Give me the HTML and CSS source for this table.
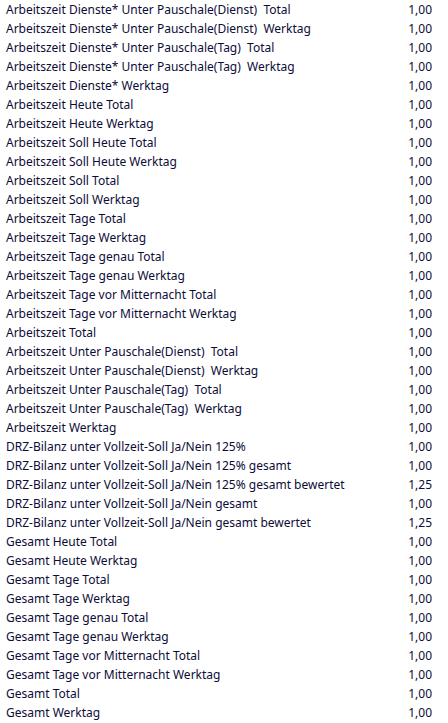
FILE: index.html
```html
<!DOCTYPE html>
<html>
<head>
<meta charset="utf-8">
<link rel="stylesheet" href="styles.css">
</head>
<body>
<div class="list">
<div class="row"><span class="name">Arbeitszeit Dienste* Unter Pauschale(Dienst)&nbsp; Total</span><span class="val">1,00</span></div>
<div class="row"><span class="name">Arbeitszeit Dienste* Unter Pauschale(Dienst)&nbsp; Werktag</span><span class="val">1,00</span></div>
<div class="row"><span class="name">Arbeitszeit Dienste* Unter Pauschale(Tag)&nbsp; Total</span><span class="val">1,00</span></div>
<div class="row"><span class="name">Arbeitszeit Dienste* Unter Pauschale(Tag)&nbsp; Werktag</span><span class="val">1,00</span></div>
<div class="row"><span class="name">Arbeitszeit Dienste* Werktag</span><span class="val">1,00</span></div>
<div class="row"><span class="name">Arbeitszeit Heute Total</span><span class="val">1,00</span></div>
<div class="row"><span class="name">Arbeitszeit Heute Werktag</span><span class="val">1,00</span></div>
<div class="row"><span class="name">Arbeitszeit Soll Heute Total</span><span class="val">1,00</span></div>
<div class="row"><span class="name">Arbeitszeit Soll Heute Werktag</span><span class="val">1,00</span></div>
<div class="row"><span class="name">Arbeitszeit Soll Total</span><span class="val">1,00</span></div>
<div class="row"><span class="name">Arbeitszeit Soll Werktag</span><span class="val">1,00</span></div>
<div class="row"><span class="name">Arbeitszeit Tage Total</span><span class="val">1,00</span></div>
<div class="row"><span class="name">Arbeitszeit Tage Werktag</span><span class="val">1,00</span></div>
<div class="row"><span class="name">Arbeitszeit Tage genau Total</span><span class="val">1,00</span></div>
<div class="row"><span class="name">Arbeitszeit Tage genau Werktag</span><span class="val">1,00</span></div>
<div class="row"><span class="name">Arbeitszeit Tage vor Mitternacht Total</span><span class="val">1,00</span></div>
<div class="row"><span class="name">Arbeitszeit Tage vor Mitternacht Werktag</span><span class="val">1,00</span></div>
<div class="row"><span class="name">Arbeitszeit Total</span><span class="val">1,00</span></div>
<div class="row"><span class="name">Arbeitszeit Unter Pauschale(Dienst)&nbsp; Total</span><span class="val">1,00</span></div>
<div class="row"><span class="name">Arbeitszeit Unter Pauschale(Dienst)&nbsp; Werktag</span><span class="val">1,00</span></div>
<div class="row"><span class="name">Arbeitszeit Unter Pauschale(Tag)&nbsp; Total</span><span class="val">1,00</span></div>
<div class="row"><span class="name">Arbeitszeit Unter Pauschale(Tag)&nbsp; Werktag</span><span class="val">1,00</span></div>
<div class="row"><span class="name">Arbeitszeit Werktag</span><span class="val">1,00</span></div>
<div class="row"><span class="name">DRZ-Bilanz unter Vollzeit-Soll Ja/Nein 125%</span><span class="val">1,00</span></div>
<div class="row"><span class="name">DRZ-Bilanz unter Vollzeit-Soll Ja/Nein 125% gesamt</span><span class="val">1,00</span></div>
<div class="row"><span class="name">DRZ-Bilanz unter Vollzeit-Soll Ja/Nein 125% gesamt bewertet</span><span class="val">1,25</span></div>
<div class="row"><span class="name">DRZ-Bilanz unter Vollzeit-Soll Ja/Nein gesamt</span><span class="val">1,00</span></div>
<div class="row"><span class="name">DRZ-Bilanz unter Vollzeit-Soll Ja/Nein gesamt bewertet</span><span class="val">1,25</span></div>
<div class="row"><span class="name">Gesamt Heute Total</span><span class="val">1,00</span></div>
<div class="row"><span class="name">Gesamt Heute Werktag</span><span class="val">1,00</span></div>
<div class="row"><span class="name">Gesamt Tage Total</span><span class="val">1,00</span></div>
<div class="row"><span class="name">Gesamt Tage Werktag</span><span class="val">1,00</span></div>
<div class="row"><span class="name">Gesamt Tage genau Total</span><span class="val">1,00</span></div>
<div class="row"><span class="name">Gesamt Tage genau Werktag</span><span class="val">1,00</span></div>
<div class="row"><span class="name">Gesamt Tage vor Mitternacht Total</span><span class="val">1,00</span></div>
<div class="row"><span class="name">Gesamt Tage vor Mitternacht Werktag</span><span class="val">1,00</span></div>
<div class="row"><span class="name">Gesamt Total</span><span class="val">1,00</span></div>
<div class="row"><span class="name">Gesamt Werktag</span><span class="val">1,00</span></div>
</div>
</body>
</html>
```

FILE: styles.css
```css
html, body {
  margin: 0;
  padding: 0;
  background: #ffffff;
}
body {
  font-family: "Noto Sans", "Open Sans", sans-serif;
  font-size: 12px;
  color: #0c0c38;
}
.list {
  display: flex;
  flex-direction: column;
  padding: 0 16px 0 6px;
}
.row {
  height: 19px;
  display: flex;
  align-items: center;
  justify-content: space-between;
  white-space: nowrap;
}
.val {
  text-align: right;
}
```
